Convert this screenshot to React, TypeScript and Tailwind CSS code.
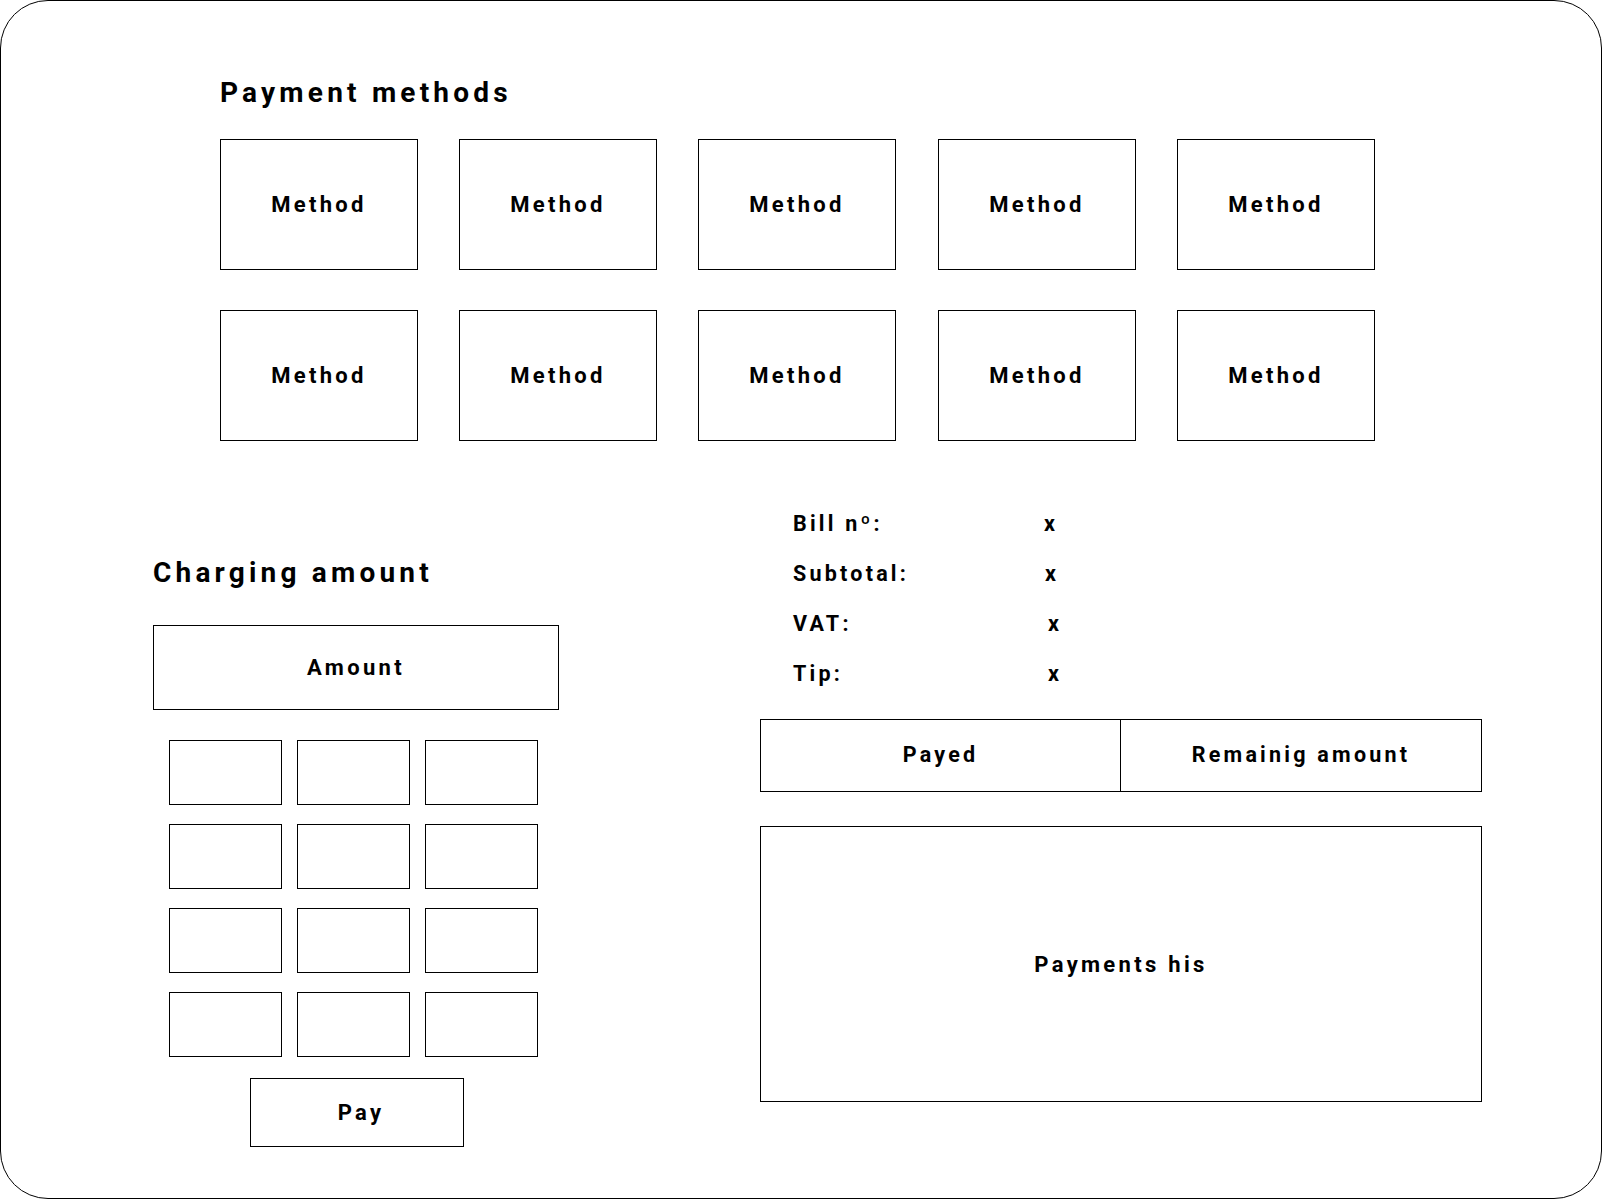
const methods = Array.from({ length: 10 }, (_, i) => i);
const keys = Array.from({ length: 12 }, (_, i) => i);

const billRows = [
  { label: 'Bill nº:', value: 'x', labelWidth: 'w-[251px]' },
  { label: 'Subtotal:', value: 'x', labelWidth: 'w-[252px]' },
  { label: 'VAT:', value: 'x', labelWidth: 'w-[255px]' },
  { label: 'Tip:', value: 'x', labelWidth: 'w-[255px]' },
];

export default function App() {
  return (
    <div
      className="w-[1602px] h-[1199px] border border-black rounded-[48px] bg-white text-black pt-[78px] overflow-hidden"
      style={{ fontFamily: 'Roboto, "Noto Sans", sans-serif' }}
    >
      {/* payment methods */}
      <div className="pl-[219px]">
        <h2 className="text-[28px] leading-[28px] font-bold tracking-[0.15em]">Payment methods</h2>
        <div className="mt-[32px] grid grid-cols-[198px_198px_198px_199px_198px] gap-x-[41px] gap-y-[40px]">
          {methods.map(m => (
            <div
              key={m}
              className={`w-[198px] h-[131px] border border-black flex items-center justify-center text-[22px] font-bold tracking-[0.15em] ${m % 5 === 3 ? 'justify-self-end' : ''}`}
            >
              Method
            </div>
          ))}
        </div>
      </div>

      <div className="flex items-start pl-[152px]">
        {/* charging amount */}
        <div className="w-[406px] flex flex-col">
          <h2 className="mt-[118px] text-[28px] leading-[28px] font-bold tracking-[0.15em]">Charging amount</h2>
          <div className="mt-[38px] h-[85px] border border-black flex items-center justify-center text-[22px] font-bold tracking-[0.15em]">
            Amount
          </div>
          <div className="mt-[30px] ml-[16px] grid grid-cols-[repeat(3,113px)] gap-x-[15px] gap-y-[19px]">
            {keys.map(k => (
              <div key={k} className="h-[65px] border border-black" />
            ))}
          </div>
          <button className="mt-[21px] ml-[97px] w-[214px] h-[69px] pl-[8px] border border-black flex items-center justify-center text-[22px] font-bold tracking-[0.15em] bg-white">
            Pay
          </button>
        </div>

        {/* bill summary */}
        <div className="ml-[201px] w-[722px] flex flex-col">
          <div className="mt-[72px] pl-[33px] flex flex-col gap-[28px]">
            {billRows.map(row => (
              <div key={row.label} className="flex text-[21.5px] leading-[22px] font-bold tracking-[0.15em]">
                <span className={row.labelWidth}>{row.label}</span>
                <span>{row.value}</span>
              </div>
            ))}
          </div>
          <div className="mt-[34px] h-[73px] flex border border-black text-[21.5px] font-bold tracking-[0.15em]">
            <div className="w-[360px] flex items-center justify-center border-r border-black">Payed</div>
            <div className="flex-1 flex items-center justify-center">Remainig amount</div>
          </div>
          <div className="mt-[34px] h-[276px] border border-black flex items-center justify-center text-[22px] font-bold tracking-[0.15em]">
            Payments his
          </div>
        </div>
      </div>
    </div>
  );
}
